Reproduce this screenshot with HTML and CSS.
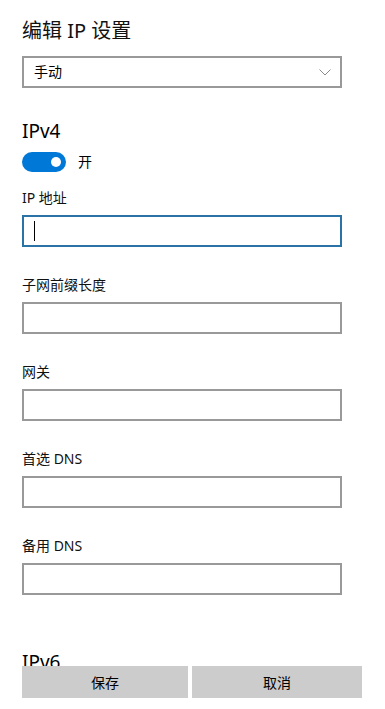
FILE: index.html
```html
<!DOCTYPE html>
<html lang="zh-CN">
<head>
<meta charset="utf-8">
<title>编辑 IP 设置</title>
<link rel="stylesheet" href="styles.css">
</head>
<body>
<main class="page">
  <h1 class="title">编辑 IP 设置</h1>
  <div class="select">
    <span class="select-text">手动</span>
    <svg class="chevron" width="12" height="7" viewBox="0 0 12 7"><path d="M0.5 0.5 L6 6 L11.5 0.5" fill="none" stroke="#8a8a8a" stroke-width="1"/></svg>
  </div>

  <h2 class="section">IPv4</h2>
  <div class="toggle-row">
    <span class="toggle"><span class="knob"></span></span>
    <span class="toggle-label">开</span>
  </div>

  <div class="field">
    <label class="label">IP 地址</label>
    <div class="input focused"><span class="caret"></span></div>
  </div>
  <div class="field">
    <label class="label">子网前缀长度</label>
    <div class="input"></div>
  </div>
  <div class="field">
    <label class="label">网关</label>
    <div class="input"></div>
  </div>
  <div class="field">
    <label class="label">首选 DNS</label>
    <div class="input"></div>
  </div>
  <div class="field">
    <label class="label">备用 DNS</label>
    <div class="input"></div>
  </div>

  <h2 class="section section-v6">IPv6</h2>
</main>
<footer class="actions">
  <button class="btn btn-save">保存</button>
  <button class="btn btn-cancel">取消</button>
</footer>
</body>
</html>
```

FILE: styles.css
```css
* { box-sizing: border-box; }
html, body {
  margin: 0;
  padding: 0;
  background: #ffffff;
  height: 709px;
  overflow: hidden;
}
body {
  font-family: "Noto Sans", "Noto Sans CJK SC", sans-serif;
  color: #000;
}
.page {
  padding: 16px 0 0 22px;
  width: 342px;
}
.title {
  margin: 0;
  font-size: 20px;
  font-weight: 400;
  line-height: 30px;
  height: 30px;
  color: #111;
}
.select {
  margin-top: 10px;
  height: 32px;
  border: 2px solid #999;
  display: flex;
  align-items: center;
  justify-content: space-between;
  padding: 0 9px 0 10px;
}
.select-text {
  font-size: 14px;
  line-height: 20px;
}
.chevron { display: block; margin-top: 1px; }
.section {
  margin: 28px 0 0 0;
  font-size: 19px;
  font-weight: 400;
  line-height: 30px;
  height: 30px;
}
.toggle-row {
  margin-top: 6px;
  display: flex;
  align-items: center;
  height: 20px;
}
.toggle {
  width: 44px;
  height: 20px;
  border-radius: 10px;
  background: #0078d7;
  display: flex;
  align-items: center;
  justify-content: flex-end;
  padding-right: 5px;
}
.knob {
  width: 10px;
  height: 10px;
  border-radius: 50%;
  background: #fff;
}
.toggle-label {
  margin-left: 12px;
  font-size: 14px;
  line-height: 20px;
}
.field {
  display: flex;
  flex-direction: column;
  margin-top: 16px;
}
.field + .field { margin-top: 28px; }
.label {
  font-size: 14px;
  line-height: 20px;
  height: 20px;
  color: #111;
}
.input {
  margin-top: 7px;
  height: 32px;
  border: 2px solid #999;
  display: flex;
  align-items: center;
  padding-left: 10px;
}
.input.focused { border-color: #2b72a6; }
.caret {
  width: 1px;
  height: 20px;
  background: #000;
}
.section-v6 { margin-top: 52px; }
.actions {
  position: fixed;
  left: 22px;
  bottom: 11px;
  width: 340px;
  display: flex;
  gap: 4px;
  background: #fff;
}
.btn {
  height: 32px;
  border: 0;
  background: #cccccc;
  font-family: "Noto Sans", "Noto Sans CJK SC", sans-serif;
  font-size: 14px;
  color: #000;
  padding: 0;
}
.btn-save { width: 166px; }
.btn-cancel { width: 170px; }
```
